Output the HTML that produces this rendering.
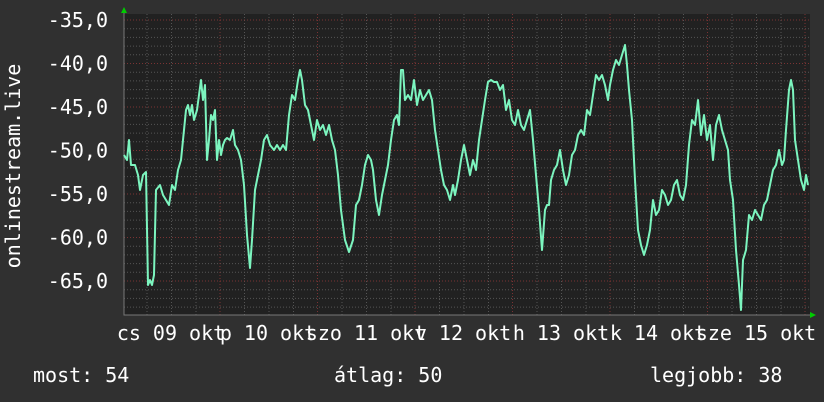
<!DOCTYPE html>
<html><head><meta charset="utf-8"><style>
html,body{margin:0;padding:0;background:#303030;width:824px;height:402px;overflow:hidden}
svg{display:block}
text{font-family:"DejaVu Sans Mono","Liberation Mono",monospace;font-size:20px;fill:#fff}
</style></head><body>
<svg width="824" height="402" viewBox="0 0 824 402" xmlns="http://www.w3.org/2000/svg">
<rect x="0" y="0" width="824" height="402" fill="#303030"/>
<rect x="124" y="14" width="686" height="301" fill="#212121"/>
<g stroke="#555" stroke-width="1" stroke-dasharray="1,2">
<!-- minor horizontal -->
<path d="M124 28.7H810M124 37.4H810M124 46.1H810M124 54.8H810M124 72.2H810M124 80.9H810M124 89.6H810M124 98.3H810M124 115.7H810M124 124.4H810M124 133.1H810M124 141.8H810M124 159.2H810M124 167.9H810M124 176.6H810M124 185.3H810M124 202.7H810M124 211.4H810M124 220.1H810M124 228.8H810M124 246.2H810M124 254.9H810M124 263.6H810M124 272.3H810M124 289.7H810M124 298.4H810M124 307.1H810"/>
<!-- minor vertical -->
<path d="M147 14V315M171.5 14V315M196 14V315M244.5 14V315M269 14V315M293.5 14V315M342 14V315M366.5 14V315M391 14V315M439.5 14V315M464 14V315M488.5 14V315M537 14V315M561.5 14V315M586 14V315M634.5 14V315M659 14V315M683.5 14V315M732 14V315M756.5 14V315M781 14V315"/>
</g>
<g stroke="#7a3333" stroke-width="1" stroke-dasharray="1,2">
<path d="M124 20H810M124 63.5H810M124 107H810M124 150.5H810M124 194H810M124 237.5H810M124 281H810"/>
<path d="M220 14V315M317.5 14V315M415 14V315M512.5 14V315M610 14V315M707.5 14V315M805 14V315"/>
</g>
<path d="M124 10V315H812" stroke="#777" stroke-width="1" fill="none"/>
<polygon points="121,13 127,13 124,7" fill="#0c0"/>
<polygon points="810,312 810,318 816,315" fill="#0c0"/>
<polyline fill="none" stroke="#7cf5bf" stroke-width="2" stroke-linejoin="round" points="124,155 127,160 129,140 131,165 135,165 138,175 140,190 143,175 146,172 148,285 150,280 152,285 154,275 156,190 160,185 163,195 166,200 169,205 172,185 175,190 178,170 181,160 184,130 186,110 188,105 190,115 192,105 194,120 197,110 199,95 201,80 203,100 205,85 207,160 209,140 211,115 213,120 215,110 217,160 219,140 221,155 223,145 225,140 227,138 230,140 233,130 235,145 238,150 241,160 244,185 247,235 250,268 252,240 255,190 258,175 261,160 264,140 267,135 270,145 274,150 277,145 280,150 283,145 286,150 289,115 292,95 295,100 298,80 300,70 302,80 305,105 308,110 311,125 314,140 317,120 320,130 323,125 326,135 329,125 332,140 335,150 338,175 341,210 345,240 349,252 353,240 356,205 359,200 362,185 365,165 368,155 371,160 373,170 376,200 379,215 382,195 385,180 388,165 391,140 394,120 397,115 399,125 401,70 403,70 405,100 408,95 411,100 414,80 417,105 420,90 423,100 426,95 429,90 432,100 435,130 438,150 441,170 444,185 447,190 450,200 453,185 455,195 458,180 461,160 464,145 467,160 470,175 473,160 476,170 479,140 482,120 485,100 488,82 491,80 494,82 497,82 500,90 503,85 506,110 509,100 512,120 515,125 518,110 521,125 524,130 527,120 530,110 533,140 536,175 539,210 542,250 545,210 547,205 549,205 551,180 554,170 557,165 560,150 563,170 566,185 569,175 572,155 575,150 578,135 581,130 584,135 587,110 590,115 593,95 596,75 599,80 602,75 605,85 608,100 610,85 613,70 616,60 619,65 622,55 625,45 627,65 629,90 632,120 635,180 638,230 641,245 644,255 647,245 650,230 653,200 656,215 659,210 662,190 665,195 668,205 671,200 674,185 677,180 680,195 683,200 686,185 689,145 692,120 695,125 698,100 701,135 704,115 707,140 710,125 713,160 716,125 719,115 722,130 725,140 728,150 730,180 733,200 736,250 739,285 741,310 743,260 746,250 749,215 752,220 755,210 758,215 761,220 764,205 767,200 770,185 773,170 776,165 779,150 782,165 784,160 786,130 789,90 791,80 793,90 795,140 798,160 801,180 804,190 806,175 808,185"/>
<g text-anchor="end">
<text x="108" y="27">-35,0</text>
<text x="108" y="70.5">-40,0</text>
<text x="108" y="114">-45,0</text>
<text x="108" y="157.5">-50,0</text>
<text x="108" y="201">-55,0</text>
<text x="108" y="244.5">-60,0</text>
<text x="108" y="288">-65,0</text>
</g>
<text transform="translate(20,166) rotate(-90)" text-anchor="middle">onlinestream.live</text>
<g text-anchor="middle">
<text x="171" y="340">cs 09 okt</text>
<text x="268" y="340">p 10 okt</text>
<text x="366" y="340">szo 11 okt</text>
<text x="463" y="340">v 12 okt</text>
<text x="561" y="340">h 13 okt</text>
<text x="658" y="340">k 14 okt</text>
<text x="756" y="340">sze 15 okt</text>
</g>
<text x="33" y="382">most: 54</text>
<text x="334" y="382">átlag: 50</text>
<text x="650" y="382">legjobb: 38</text>
</svg>
</body></html>
